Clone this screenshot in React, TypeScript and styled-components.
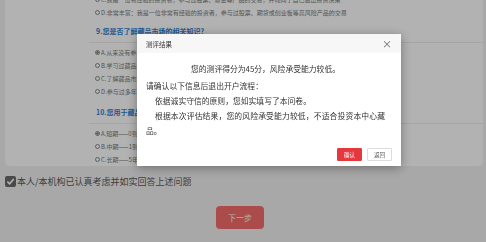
import React from 'react';
import styled, { createGlobalStyle } from 'styled-components';

const GlobalStyle = createGlobalStyle`
  html, body {
    margin: 0;
    padding: 0;
    background: #f1f1f1;
    font-family: "Noto Sans CJK SC", "Noto Sans", sans-serif;
    overflow: hidden;
  }
`;

interface Option {
  label: string;
  checked?: boolean;
}

interface Question {
  title?: string;
  options: Option[];
  padTop: number;
  padBottom: number;
}

const questions: Question[] = [
  {
    padTop: 0,
    padBottom: 1,
    options: [
      { label: 'C.我是一位有经验的投资者，参与过股票、基金等产品的交易，并倾向于自己做出投资决策' },
      { label: 'D.非常丰富：我是一位非常有经验的投资者，参与过股票、期货或创业板等高风险产品的交易' },
    ],
  },
  {
    title: '9.您是否了解藏品市场的相关知识？',
    padTop: 3,
    padBottom: 3,
    options: [
      { label: 'A.从来没有参与过藏品交易', checked: true },
      { label: 'B.学习过藏品市场相关知识' },
      { label: 'C.了解藏品市场的交易规则' },
      { label: 'D.参与过多年藏品交易' },
    ],
  },
  {
    title: '10.您用于藏品投资的资金期限是？',
    padTop: 3,
    padBottom: 0,
    options: [
      { label: 'A.短期——0到1年', checked: true },
      { label: 'B.中期——1到5年' },
      { label: 'C.长期——5年以上' },
    ],
  },
];

const App: React.FC = () => {
  return (
    <>
      <GlobalStyle />
      <Page>
        <Card>
          {questions.map((q, i) => (
            <Block key={i}>
              {q.title && <QTitle>{q.title}</QTitle>}
              <OptionList $padTop={q.padTop} $padBottom={q.padBottom}>
                {q.options.map(o => (
                  <OptionRow key={o.label}>
                    <Radio $checked={!!o.checked} />
                    {o.label}
                  </OptionRow>
                ))}
              </OptionList>
            </Block>
          ))}
        </Card>
        <AgreeRow>
          <CheckBox>
            <svg width="9" height="9" viewBox="0 0 10 10">
              <path d="M1.5 5.2 L4 7.6 L8.6 2.2" stroke="#fff" strokeWidth="1.8" fill="none" />
            </svg>
          </CheckBox>
          本人/本机构已认真考虑并如实回答上述问题
        </AgreeRow>
        <NextWrap>
          <NextButton>下一步</NextButton>
        </NextWrap>
      </Page>

      <Mask />
      <Dialog>
        <DialogHeader>
          <span>测评结果</span>
          <CloseBtn>×</CloseBtn>
        </DialogHeader>
        <DialogBody>
          <ScoreLine>您的测评得分为45分，风险承受能力较低。</ScoreLine>
          <Para>请确认以下信息后退出开户流程：</Para>
          <Para $indent>依据诚实守信的原则，您如实填写了本问卷。</Para>
          <Para $indent>根据本次评估结果，您的风险承受能力较低，不适合投资本中心藏品。</Para>
        </DialogBody>
        <DialogFooter>
          <DlgButton $primary>确认</DlgButton>
          <DlgButton>返回</DlgButton>
        </DialogFooter>
      </Dialog>
    </>
  );
};

export default App;

const Page = styled.div`
  width: 486px;
  height: 242px;
`;

const Card = styled.div`
  margin: -7px 3px 0 5px;
  background: #fff;
  border-radius: 0 0 5px 5px;
  padding-left: 84px;
`;

const Block = styled.div``;

const QTitle = styled.div`
  height: 22px;
  line-height: 22px;
  padding-left: 7px;
  font-size: 7px;
  font-weight: bold;
  color: #2f7fd4;
  border-bottom: 1px solid #ececec;
  white-space: nowrap;
`;

const OptionList = styled.div<{ $padTop: number; $padBottom: number }>`
  padding: ${p => p.$padTop}px 0 ${p => p.$padBottom}px 6px;
`;

const OptionRow = styled.div`
  display: flex;
  align-items: center;
  height: 13px;
  font-size: 6px;
  color: #7a7a7a;
  white-space: nowrap;
`;

const Radio = styled.span<{ $checked: boolean }>`
  box-sizing: border-box;
  width: 5px;
  height: 5px;
  margin-right: 1px;
  border-radius: 50%;
  border: 0.8px solid #888;
  background: ${p => (p.$checked ? 'radial-gradient(circle, #777 0 45%, #fff 55%)' : '#fff')};
`;

const AgreeRow = styled.div`
  display: flex;
  align-items: center;
  margin: 10px 0 0 5px;
  height: 11px;
  font-size: 9px;
  color: #5a5a5a;
  white-space: nowrap;
`;

const CheckBox = styled.span`
  display: flex;
  align-items: center;
  justify-content: center;
  width: 11px;
  height: 11px;
  margin-right: 1px;
  border-radius: 2px;
  background: #6b6b6b;
`;

const NextWrap = styled.div`
  display: flex;
  justify-content: center;
  padding-right: 6px;
  margin-top: 19px;
`;

const NextButton = styled.div`
  width: 48px;
  height: 23px;
  line-height: 23px;
  text-align: center;
  border-radius: 4px;
  background: #f56c6c;
  color: #fff;
  font-size: 8px;
`;

const Mask = styled.div`
  position: fixed;
  inset: 0;
  background: rgba(0, 0, 0, 0.3);
`;

const Dialog = styled.div`
  position: fixed;
  left: 137px;
  top: 34px;
  width: 264px;
  height: 132px;
  background: #fff;
  display: flex;
  flex-direction: column;
  box-shadow: 0 2px 10px rgba(0, 0, 0, 0.35);
`;

const DialogHeader = styled.div`
  display: flex;
  align-items: center;
  justify-content: space-between;
  height: 19px;
  padding: 0 9px;
  background: #f7f7f7;
  font-size: 6.5px;
  color: #333;
`;

const CloseBtn = styled.span`
  font-size: 10px;
  color: #666;
  line-height: 1;
`;

const DialogBody = styled.div`
  padding: 8px 16px 0 9px;
  font-size: 7.8px;
  line-height: 15px;
  color: #333;
`;

const ScoreLine = styled.p`
  margin: 0 0 2px;
  text-align: center;
`;

const Para = styled.p<{ $indent?: boolean }>`
  margin: 0;
  text-align: justify;
  text-indent: ${p => (p.$indent ? '9px' : '0')};
`;

const DialogFooter = styled.div`
  margin-top: auto;
  display: flex;
  justify-content: flex-end;
  gap: 5px;
  padding: 0 9px 5px;
`;

const DlgButton = styled.div<{ $primary?: boolean }>`
  box-sizing: border-box;
  width: 25px;
  height: 13px;
  line-height: 12px;
  text-align: center;
  font-size: 5.5px;
  border-radius: 1px;
  background: ${p => (p.$primary ? '#e5383e' : '#fff')};
  color: ${p => (p.$primary ? '#fff' : '#555')};
  border: 0.5px solid ${p => (p.$primary ? '#e5383e' : '#ddd')};
`;
